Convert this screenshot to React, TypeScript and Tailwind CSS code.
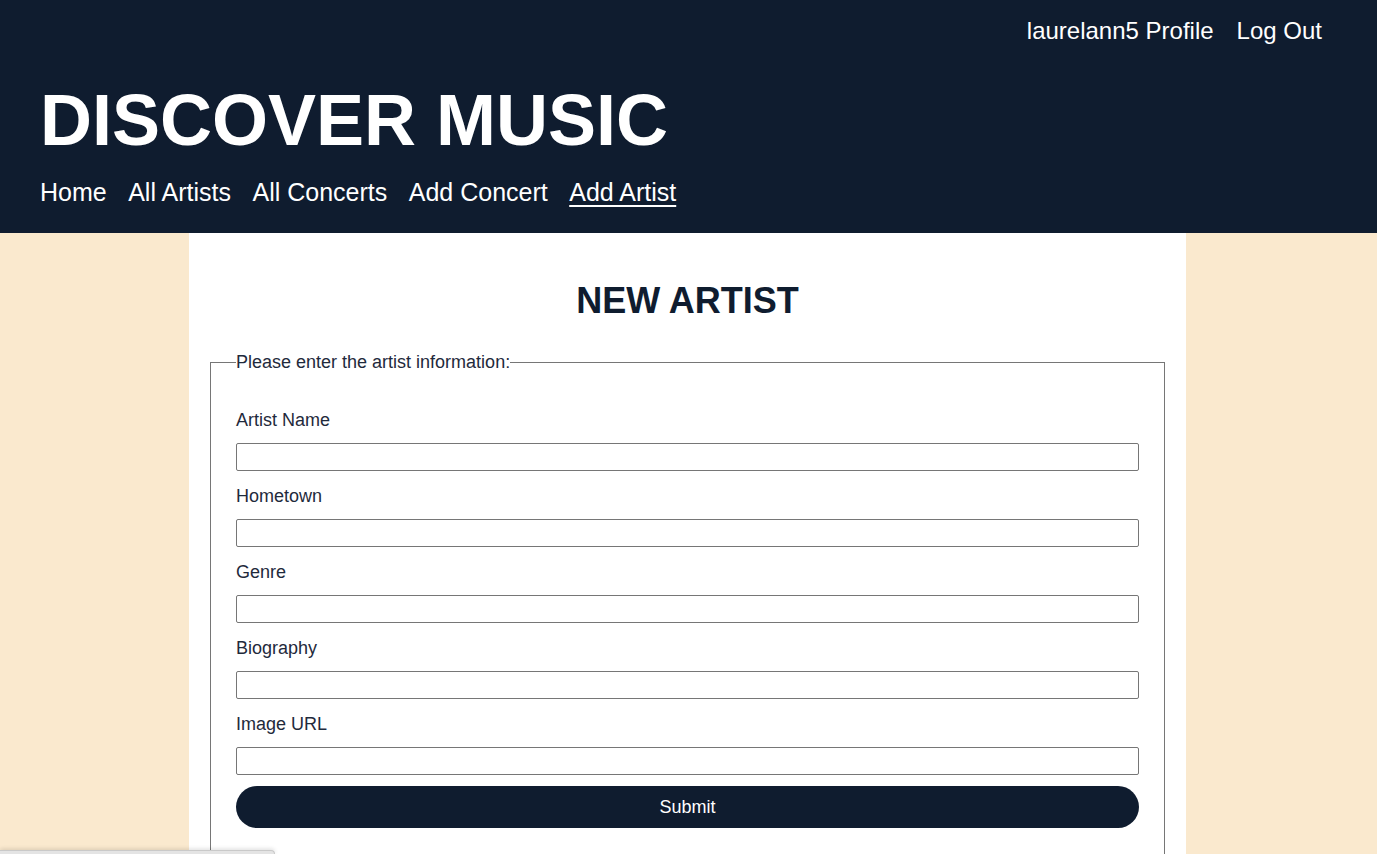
import React from "react";

const fields = ["Artist Name", "Hometown", "Genre", "Biography", "Image URL"];

export default function App() {
  return (
    <div
      className="min-h-screen bg-[#fae9ce]"
      style={{ fontFamily: '"Liberation Sans", Arial, Helvetica, sans-serif' }}
    >
      <header className="h-[233px] bg-[#0f1c2f] text-white pt-[17px]">
        <div className="flex justify-end gap-[23px] pr-[55px] text-[24px] leading-[28px]">
          <a href="#">laurelann5 Profile</a>
          <a href="#">Log Out</a>
        </div>
        <h1 className="mt-[39px] pl-[40px] text-[72px] leading-[72px] font-bold">
          DISCOVER MUSIC
        </h1>
        <nav className="mt-[22px] pl-[40px] flex gap-[21.5px] text-[25px] leading-[28px]">
          <a href="#">Home</a>
          <a href="#">All Artists</a>
          <a href="#">All Concerts</a>
          <a href="#">Add Concert</a>
          <a href="#" className="underline underline-offset-[4px] decoration-[2px]">
            Add Artist
          </a>
        </nav>
      </header>

      <main className="ml-[189px] w-[997px] bg-white pt-[48px] pb-[40px]">
        <h2 className="text-center text-[36px] leading-[40px] font-bold text-[#0f1c2f]">
          NEW ARTIST
        </h2>
        <fieldset className="mx-[21px] mt-[31px] border border-[#767676] px-[25px] pt-[35px] pb-[30px] text-[#1f2a3c]">
          <legend className="text-[18px] leading-[21px] px-0">
            Please enter the artist information:
          </legend>
          {fields.map((f, i) => (
            <div key={f} className={i === 0 ? "" : "mt-[13px]"}>
              <label className="block text-[18px] leading-[24px]">{f}</label>
              <input
                type="text"
                className="mt-[11px] block w-full h-[28px] border border-[#767676] rounded-[2px] bg-white"
              />
            </div>
          ))}
          <button
            type="button"
            className="mt-[11px] w-full h-[42px] rounded-full bg-[#0f1c2f] text-white text-[18px]"
          >
            Submit
          </button>
          <div className="h-[200px]" />
        </fieldset>
      </main>

      <div className="fixed left-0 bottom-0 w-[275px] h-[4px] bg-[#e4e4e4] border-t border-r border-[#c9c9c9] rounded-tr-[4px] shadow-[0_-1px_4px_rgba(0,0,0,0.15)]" />
    </div>
  );
}
